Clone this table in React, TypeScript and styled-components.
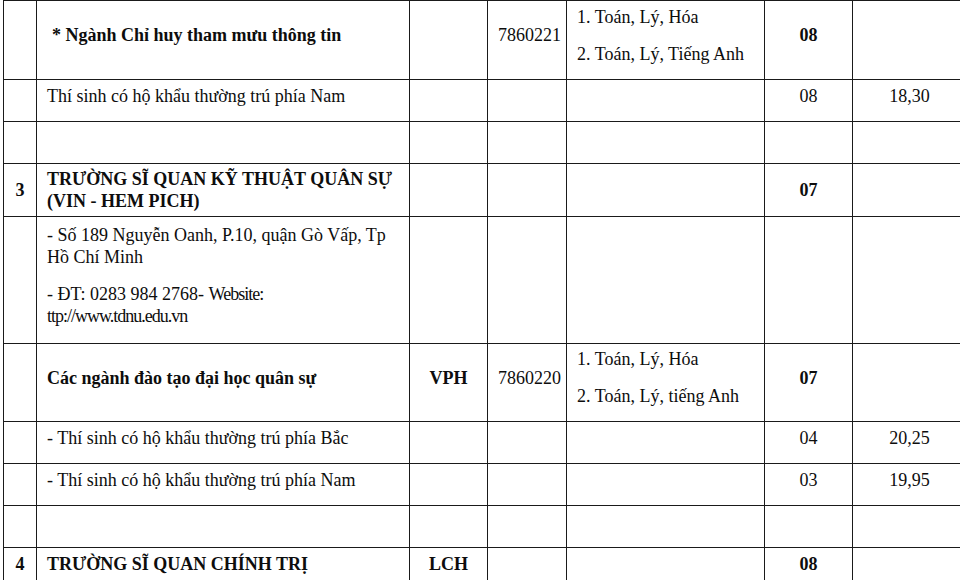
import React from 'react'
import styled, { createGlobalStyle } from 'styled-components'

type Align = 'left' | 'center'

type Cell = {
  text?: React.ReactNode
  lines?: React.ReactNode[]
  bold?: boolean
  indent?: number
}

type Row = {
  height: number
  tail: number
  cells: Cell[]
}

const GlobalStyle = createGlobalStyle`
  html, body {
    margin: 0;
    padding: 0;
    background: #ffffff;
  }
`

const Sheet = styled.div`
  width: 960px;
  height: 580px;
  overflow: hidden;
  padding-left: 3px;
  box-sizing: border-box;
  background: #ffffff;
`

const Table = styled.table`
  width: 963px;
  table-layout: fixed;
  border-collapse: collapse;
`

const TableRow = styled.tr<{ $height: number }>`
  height: ${(p) => p.$height}px;
`

const TableCell = styled.td<{ $align: Align; $bold: boolean; $tail: number }>`
  border: 1px solid #1a1a1a;
  padding: 0 10px ${(p) => p.$tail}px;
  vertical-align: middle;
  text-align: ${(p) => p.$align};
  font-family: 'Liberation Serif', 'Times New Roman', serif;
  font-size: 18px;
  line-height: 22px;
  font-weight: ${(p) => (p.$bold ? 700 : 400)};
  color: #0d0d0d;
  white-space: normal;
  overflow: hidden;
`

const Text = styled.div<{ $indent: number }>`
  padding-left: ${(p) => p.$indent}px;
`

const Para = styled.p`
  margin: 0;

  & + & {
    margin-top: 15px;
  }
`

const Narrow = styled.span`
  letter-spacing: -1px;
`

const COLUMNS: { width: number; align: Align }[] = [
  { width: 33, align: 'center' },
  { width: 373, align: 'left' },
  { width: 78, align: 'center' },
  { width: 79, align: 'center' },
  { width: 198, align: 'left' },
  { width: 88, align: 'center' },
  { width: 114, align: 'center' },
]

const blank = (): Cell[] => COLUMNS.map(() => ({}))

const ROWS: Row[] = [
  {
    height: 79,
    tail: 10,
    cells: [
      {},
      { text: '* Ngành Chỉ huy tham mưu thông tin', bold: true, indent: 5 },
      {},
      { text: '7860221' },
      { lines: ['1. Toán, Lý, Hóa', '2. Toán, Lý, Tiếng Anh'] },
      { text: '08', bold: true },
      {},
    ],
  },
  {
    height: 42,
    tail: 10,
    cells: [
      {},
      { text: 'Thí sinh có hộ khẩu thường trú phía Nam' },
      {},
      {},
      {},
      { text: '08' },
      { text: '18,30' },
    ],
  },
  { height: 42, tail: 10, cells: blank() },
  {
    height: 53,
    tail: 0,
    cells: [
      { text: '3', bold: true },
      { text: 'TRƯỜNG SĨ QUAN KỸ THUẬT QUÂN SỰ (VIN - HEM PICH)', bold: true },
      {},
      {},
      {},
      { text: '07', bold: true },
      {},
    ],
  },
  {
    height: 127,
    tail: 10,
    cells: [
      {},
      {
        lines: [
          '- Số 189 Nguyễn Oanh, P.10, quận Gò Vấp, Tp Hồ Chí Minh',
          <>
            - ĐT: 0283 984 2768- <Narrow>Website:</Narrow>
            <br />
            <Narrow>ttp://www.tdnu.edu.vn</Narrow>
          </>,
        ],
      },
      {},
      {},
      {},
      {},
      {},
    ],
  },
  {
    height: 78,
    tail: 10,
    cells: [
      {},
      { text: 'Các ngành đào tạo đại học quân sự', bold: true },
      { text: 'VPH', bold: true },
      { text: '7860220' },
      { lines: ['1. Toán, Lý, Hóa', '2. Toán, Lý, tiếng Anh'] },
      { text: '07', bold: true },
      {},
    ],
  },
  {
    height: 42,
    tail: 10,
    cells: [
      {},
      { text: '- Thí sinh có hộ khẩu thường trú phía Bắc' },
      {},
      {},
      {},
      { text: '04' },
      { text: '20,25' },
    ],
  },
  {
    height: 42,
    tail: 10,
    cells: [
      {},
      { text: '- Thí sinh có hộ khẩu thường trú phía Nam' },
      {},
      {},
      {},
      { text: '03' },
      { text: '19,95' },
    ],
  },
  { height: 42, tail: 10, cells: blank() },
  {
    height: 42,
    tail: 10,
    cells: [
      { text: '4', bold: true },
      { text: 'TRƯỜNG SĨ QUAN CHÍNH TRỊ', bold: true },
      { text: 'LCH', bold: true },
      {},
      {},
      { text: '08', bold: true },
      {},
    ],
  },
]

export default function App() {
  return (
    <>
      <GlobalStyle />
      <Sheet>
        <Table>
          <colgroup>
            {COLUMNS.map((c, i) => (
              <col key={i} style={{ width: c.width }} />
            ))}
          </colgroup>
          <tbody>
            {ROWS.map((row, r) => (
              <TableRow key={r} $height={row.height}>
                {row.cells.map((cell, c) => (
                  <TableCell
                    key={c}
                    $align={COLUMNS[c].align}
                    $bold={!!cell.bold}
                    $tail={row.tail}
                  >
                    {cell.lines ? (
                      cell.lines.map((line, i) => <Para key={i}>{line}</Para>)
                    ) : (
                      <Text $indent={cell.indent ?? 0}>{cell.text}</Text>
                    )}
                  </TableCell>
                ))}
              </TableRow>
            ))}
          </tbody>
        </Table>
      </Sheet>
    </>
  )
}
